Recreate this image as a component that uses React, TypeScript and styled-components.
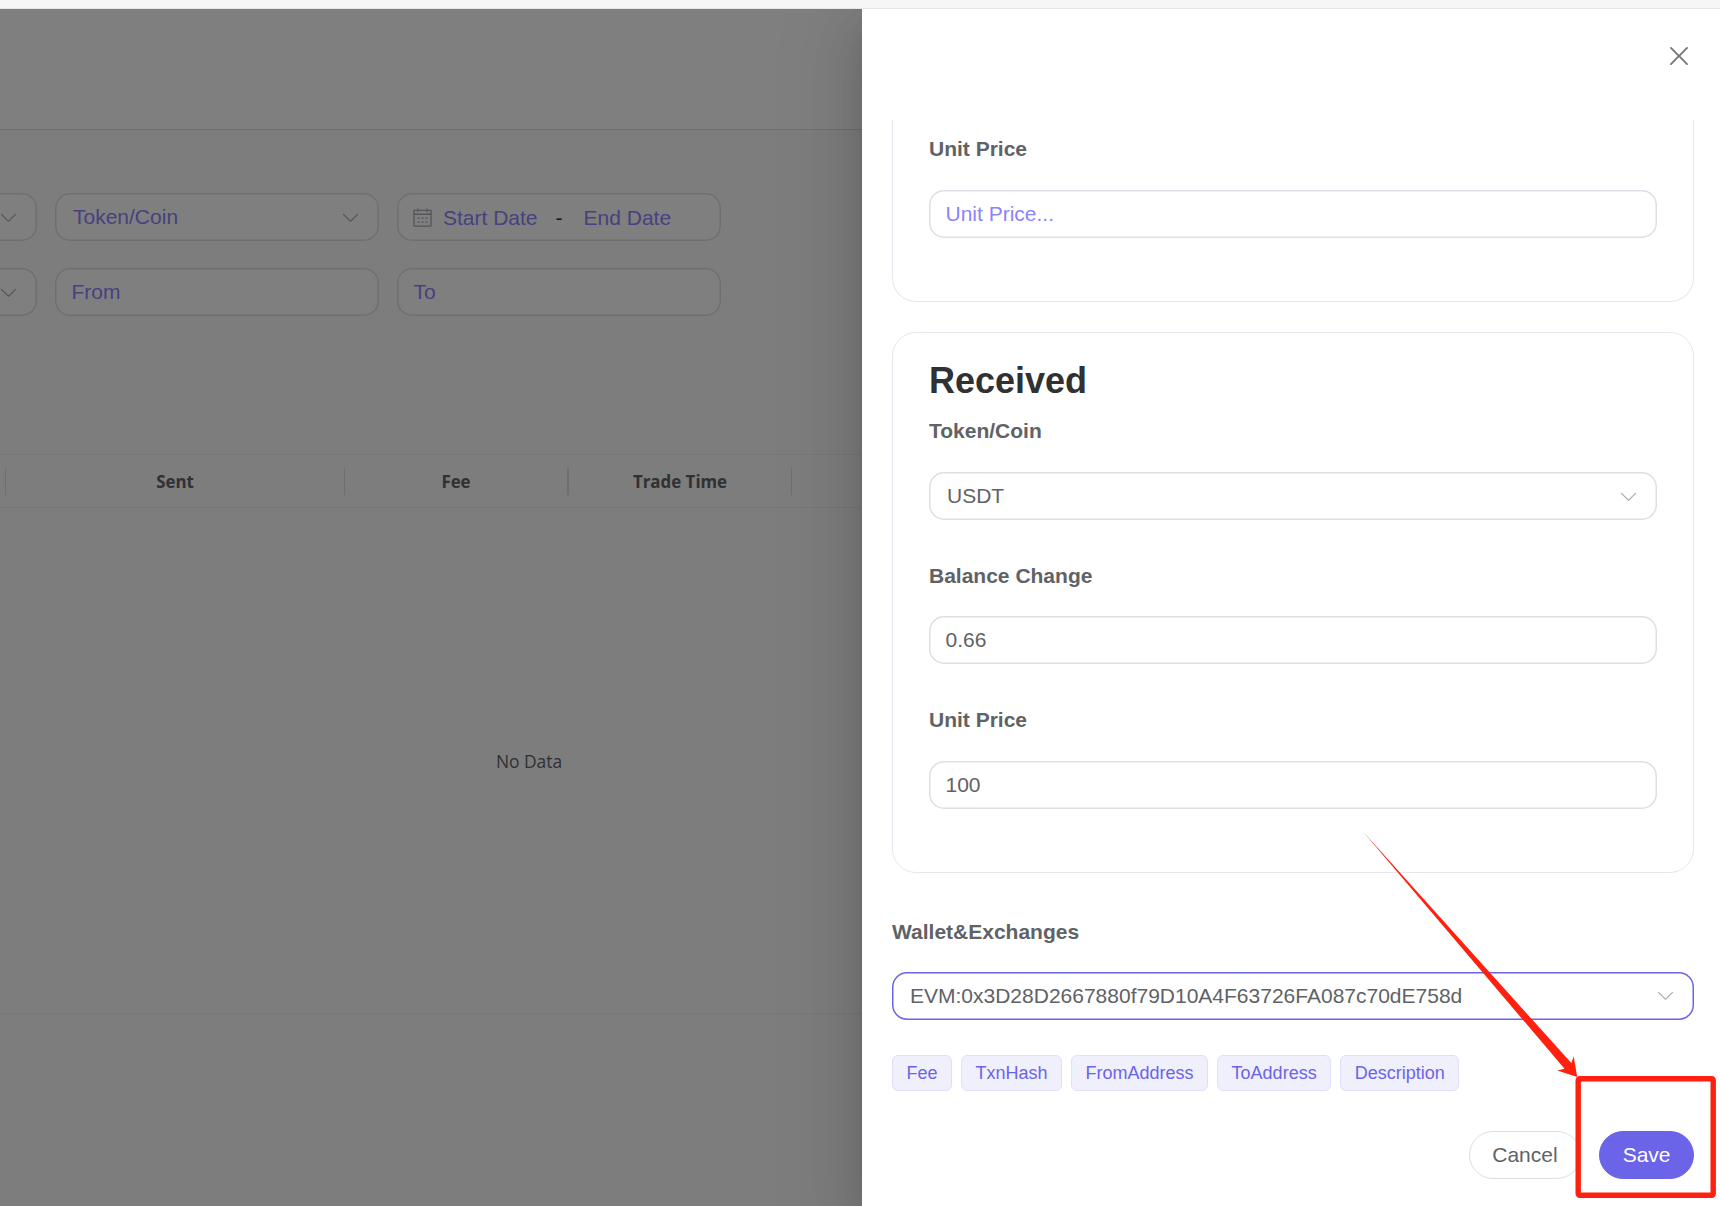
import React from 'react';
import styled, { createGlobalStyle, css } from 'styled-components';

const color = {
  primary: '#6b64e8',
  placeholder: '#8c84fb',
  text: '#606266',
  title: '#303133',
  border: '#dcdfe6',
  borderLight: '#e4e7ed',
  icon: '#a8abb2',
  mark: '#ff2010',
};

const GlobalStyle = createGlobalStyle`
  *, *::before, *::after { box-sizing: border-box; }
  body {
    margin: 0;
    overflow: hidden;
    background: #fff;
    font-family: "Liberation Sans", Arial, sans-serif;
    font-size: 21px;
    color: ${color.text};
  }
  button { font: inherit; cursor: pointer; }
`;

const Window = styled.div`
  display: flex;
  flex-direction: column;
  width: 1720px;
  height: 1206px;
`;

const ChromeStrip = styled.div`
  flex: none;
  height: 9px;
  background: #f6f6f6;
  border-bottom: 1px solid #e6e6e6;
`;

const Stage = styled.div`
  position: relative;
  flex: 1;
  overflow: hidden;
`;

const Page = styled.main`
  display: flex;
  flex-direction: column;
  height: 100%;
  background: #fafafa;
`;

const PageHeader = styled.header`
  flex: none;
  height: 121px;
  background: #fff;
  border-bottom: 1px solid ${color.border};
`;

const Filters = styled.section`
  display: grid;
  grid-template-columns: repeat(3, 324px);
  gap: 27px 18px;
  margin: 63px 0 138px -287px;
`;

const Control = styled.div<{ $kind?: 'input' | 'select' | 'date'; $focus?: boolean; $empty?: boolean }>`
  display: flex;
  align-items: center;
  height: 48px;
  padding: 0 ${(p) => (p.$kind === 'select' ? 18 : 16.5)}px;
  border-radius: 15px;
  background: #fff;
  box-shadow: inset 0 0 0 1.5px ${(p) => (p.$focus ? color.primary : color.border)};
  color: ${(p) => (p.$empty ? color.placeholder : color.text)};
  line-height: 48px;
  white-space: nowrap;
  ${(p) =>
    p.$kind === 'select' &&
    css`
      justify-content: space-between;
    `}
  ${(p) =>
    p.$kind === 'date' &&
    css`
      padding: 0 15px;
    `}
`;

const Glyph = styled.svg<{ $size?: number; $tone?: string }>`
  flex: none;
  display: block;
  width: ${(p) => p.$size ?? 21}px;
  height: ${(p) => p.$size ?? 21}px;
  fill: ${(p) => p.$tone ?? color.icon};
`;

const DateText = styled.span`
  padding-top: 1px;
`;

const DateStart = styled(DateText)`
  padding-left: 10px;
`;

const DateDash = styled(DateText)`
  padding-left: 18px;
  padding-right: 21px;
  color: ${color.title};
`;

const Table = styled.section`
  width: 1632px;
  margin-left: -287px;
  border-top: 1px solid #ebeef5;
  border-bottom: 1px solid #ebeef5;
  font-family: "Open Sans", "Noto Sans", sans-serif;
  font-size: 17.4px;
`;

const TableHead = styled.div`
  display: grid;
  grid-template-columns: 293px 339px 224px 223px 1fr;
  height: 53px;
  align-items: center;
  border-bottom: 1px solid #ebeef5;
`;

const HeadCell = styled.div<{ $rule?: number }>`
  height: 27px;
  line-height: 28px;
  text-align: center;
  font-weight: 700;
  font-size: 16.9px;
  border-right: ${(p) => p.$rule ?? 1}px solid ${color.border};
`;

const TableBody = styled.div`
  display: flex;
  align-items: center;
  justify-content: center;
  height: 505px;
  padding-top: 1px;
`;

const Overlay = styled.div`
  position: absolute;
  inset: 0;
  background: rgba(0, 0, 0, 0.5);
`;

const Drawer = styled.aside`
  position: absolute;
  top: 0;
  right: 0;
  bottom: 0;
  width: 858px;
  display: flex;
  flex-direction: column;
  background: #fff;
  box-shadow:
    0 24px 72px 24px rgba(0, 0, 0, 0.08),
    0 18px 48px rgba(0, 0, 0, 0.12),
    0 12px 24px -12px rgba(0, 0, 0, 0.16);
`;

const DrawerHeader = styled.header`
  flex: none;
  display: flex;
  justify-content: flex-end;
  height: 111px;
  padding: 32px 26px 0;
`;

const CloseButton = styled.button`
  width: 30px;
  height: 30px;
  padding: 0;
  border: 0;
  background: none;
`;

const DrawerBody = styled.div`
  flex: 1;
  min-height: 0;
  padding: 0 26px 0 30px;
  overflow: hidden;
`;

const Card = styled.section<{ $scrolled?: boolean }>`
  padding: 24px 36px 63px;
  border: 1px solid ${color.borderLight};
  border-radius: 24px;
  ${(p) =>
    p.$scrolled &&
    css`
      padding-top: 12px;
      border-top: 0;
      border-radius: 0 0 24px 24px;
      margin-bottom: 30px;
    `}
`;

const CardTitle = styled.h2`
  margin: 0 0 9px;
  font-size: 36px;
  line-height: 48px;
  color: ${color.title};
`;

const Label = styled.div<{ $tight?: boolean }>`
  padding-top: ${(p) => (p.$tight ? 1 : 0)}px;
  margin-bottom: ${(p) => (p.$tight ? 24 : 25)}px;
  font-weight: 700;
  line-height: 33px;
`;

const Field = styled.div`
  & + & {
    margin-top: 38.4px;
  }
`;

const WalletField = styled.div`
  margin-top: 41px;
`;

const Tags = styled.div`
  display: flex;
  gap: 9px;
  margin-top: 35px;
`;

const Tag = styled.span`
  height: 36px;
  padding: 0 13.5px;
  border: 1px solid #e1e0fa;
  border-radius: 6px;
  background: #f0effc;
  color: ${color.primary};
  font-size: 18px;
  line-height: 34px;
`;

const Actions = styled.footer`
  display: flex;
  justify-content: flex-end;
  gap: 18px;
  margin-top: 40px;
`;

const Button = styled.button<{ $primary?: boolean }>`
  height: 48px;
  padding: 0 22.5px;
  border: 1px solid ${(p) => (p.$primary ? color.primary : color.border)};
  border-radius: 24px;
  background: ${(p) => (p.$primary ? color.primary : '#fff')};
  color: ${(p) => (p.$primary ? '#fff' : color.text)};
`;

const Annotation = styled.svg`
  position: absolute;
  top: 0;
  left: 0;
  pointer-events: none;
`;

const ChevronDown = () => (
  <Glyph viewBox="0 0 1024 1024">
    <path d="M831.872 340.864 512 652.672 192.128 340.864a30.592 30.592 0 0 0-42.752 0 29.12 29.12 0 0 0 0 41.6L489.664 714.24a32 32 0 0 0 44.672 0l340.288-331.712a29.12 29.12 0 0 0 0-41.728 30.592 30.592 0 0 0-42.752 0z" />
  </Glyph>
);

const CalendarIcon = () => (
  <Glyph viewBox="0 0 1024 1024">
    <path d="M128 384v512h768V192H768v32a32 32 0 1 1-64 0v-32H320v32a32 32 0 0 1-64 0v-32H128v128h768v64zm192-256h384V96a32 32 0 1 1 64 0v32h160a32 32 0 0 1 32 32v768a32 32 0 0 1-32 32H96a32 32 0 0 1-32-32V160a32 32 0 0 1 32-32h160V96a32 32 0 0 1 64 0zm-32 384h64a32 32 0 0 1 0 64h-64a32 32 0 0 1 0-64m0 192h64a32 32 0 1 1 0 64h-64a32 32 0 1 1 0-64m192-192h64a32 32 0 0 1 0 64h-64a32 32 0 0 1 0-64m0 192h64a32 32 0 1 1 0 64h-64a32 32 0 1 1 0-64m192-192h64a32 32 0 1 1 0 64h-64a32 32 0 1 1 0-64m0 192h64a32 32 0 1 1 0 64h-64a32 32 0 1 1 0-64" />
  </Glyph>
);

const CloseIcon = () => (
  <Glyph viewBox="0 0 1024 1024" $size={30} $tone="#72767b">
    <path d="M764.288 214.592 512 466.88 259.712 214.592a31.936 31.936 0 0 0-45.12 45.12L466.752 512 214.528 764.224a31.936 31.936 0 1 0 45.12 45.184L512 557.184l252.288 252.288a31.936 31.936 0 0 0 45.12-45.12L557.12 512.064l252.288-252.352a31.936 31.936 0 1 0-45.12-45.184z" />
  </Glyph>
);

type SelectProps = { value?: string; placeholder?: string; focus?: boolean };

const Select = ({ value, placeholder, focus }: SelectProps) => (
  <Control $kind="select" $focus={focus} $empty={!value}>
    <span>{value ?? placeholder}</span>
    <ChevronDown />
  </Control>
);

const Input = ({ value, placeholder }: SelectProps) => (
  <Control $kind="input" $empty={!value}>
    {value ?? placeholder}
  </Control>
);

const tags = ['Fee', 'TxnHash', 'FromAddress', 'ToAddress', 'Description'];

export default function App() {
  return (
    <Window>
      <GlobalStyle />
      <ChromeStrip />
      <Stage>
        <Page>
          <PageHeader />
          <Filters>
            <Select />
            <Select placeholder="Token/Coin" />
            <Control $kind="date" $empty>
              <CalendarIcon />
              <DateStart>Start Date</DateStart>
              <DateDash>-</DateDash>
              <DateText>End Date</DateText>
            </Control>
            <Select />
            <Input placeholder="From" />
            <Input placeholder="To" />
          </Filters>
          <Table>
            <TableHead>
              <HeadCell />
              <HeadCell>Sent</HeadCell>
              <HeadCell $rule={2}>Fee</HeadCell>
              <HeadCell>Trade Time</HeadCell>
            </TableHead>
            <TableBody>No Data</TableBody>
          </Table>
        </Page>
        <Overlay />
        <Drawer>
          <DrawerHeader>
            <CloseButton aria-label="Close">
              <CloseIcon />
            </CloseButton>
          </DrawerHeader>
          <DrawerBody>
            <Card $scrolled>
              <Field>
                <Label>Unit Price</Label>
                <Input placeholder="Unit Price..." />
              </Field>
            </Card>
            <Card>
              <CardTitle>Received</CardTitle>
              <Field>
                <Label>Token/Coin</Label>
                <Select value="USDT" />
              </Field>
              <Field>
                <Label $tight>Balance Change</Label>
                <Input value="0.66" />
              </Field>
              <Field>
                <Label>Unit Price</Label>
                <Input value="100" />
              </Field>
            </Card>
            <WalletField>
              <Label $tight>Wallet&amp;Exchanges</Label>
              <Select focus value="EVM:0x3D28D2667880f79D10A4F63726FA087c70dE758d" />
            </WalletField>
            <Tags>
              {tags.map((t) => (
                <Tag key={t}>{t}</Tag>
              ))}
            </Tags>
            <Actions>
              <Button>Cancel</Button>
              <Button $primary>Save</Button>
            </Actions>
          </DrawerBody>
        </Drawer>
        <Annotation width="1720" height="1197" viewBox="0 9 1720 1197">
          <rect x="1578.2" y="1078.7" width="135" height="116.6" rx="1.5" fill="none" stroke={color.mark} strokeWidth="5.4" />
          <path
            d="M1362.5 831 L1571.3 1063 L1573.7 1056.5 L1577.2 1077 L1557.3 1070.6 L1564.5 1068.8 Z"
            fill={color.mark}
          />
        </Annotation>
      </Stage>
    </Window>
  );
}
